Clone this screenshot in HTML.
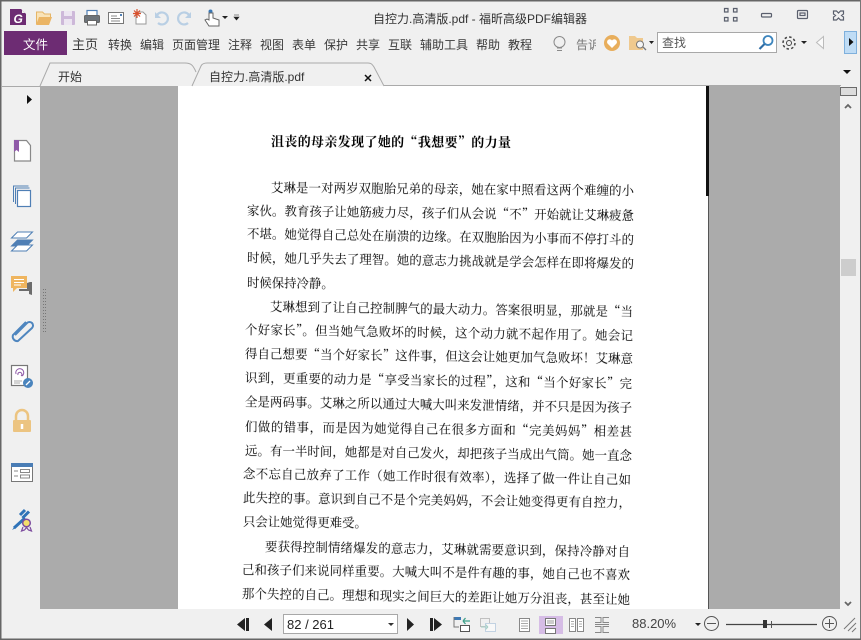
<!DOCTYPE html>
<html lang="zh-CN"><head><meta charset="utf-8"><style>
html,body{margin:0;padding:0}
body{width:861px;height:640px;position:relative;overflow:hidden;background:#f0f0f0;font-family:"Liberation Sans","Noto Sans CJK SC",sans-serif;color:#333}
.a{position:absolute;white-space:nowrap;z-index:2}
.m{position:absolute;z-index:2;top:36px;font-size:12px;line-height:18px;color:#3a3a3a;white-space:nowrap}
#doc{position:absolute;left:40px;top:86px;width:800px;height:523px;background:#ababab;overflow:hidden}
#pg{position:absolute;left:138px;top:0;width:531px;height:523px;background:#fff;border-right:1px solid #555;box-sizing:border-box}
.l{position:absolute;margin-top:-1px;font-family:"Noto Serif CJK SC","Liberation Serif",serif;font-size:12.4px;line-height:16px;height:16px;color:#000;transform-origin:0 50%;text-align:justify;text-align-last:justify;white-space:nowrap;filter:blur(.2px)}
svg{position:absolute;left:0;top:0}
</style></head><body>

<div id="doc"><div id="pg"></div>
<div style="position:absolute;left:666px;top:0;width:2.5px;height:110px;background:#111"></div>
<div class="l" style="left:231px;top:48px;width:240px;font-size:13px;font-weight:700;transform:rotate(.25deg)">沮丧的母亲发现了她的“我想要”的力量</div>
<div class="l" style="left:231px;top:94px;width:363px;transform:rotate(.47deg)">艾琳是一对两岁双胞胎兄弟的母亲，她在家中照看这两个难缠的小</div>
<div class="l" style="left:207px;top:117px;width:387px;transform:rotate(.74deg)">家伙。教育孩子让她筋疲力尽，孩子们从会说“不”开始就让艾琳疲惫</div>
<div class="l" style="left:207px;top:140px;width:387px;transform:rotate(.89deg)">不堪。她觉得自己总处在崩溃的边缘。在双胞胎因为小事而不停打斗的</div>
<div class="l" style="left:207px;top:164px;width:387px;transform:rotate(.89deg)">时候，她几乎失去了理智。她的意志力挑战就是学会怎样在即将爆发的</div>
<div class="l" style="left:207px;top:189px;width:80px;transform:rotate(.7deg)">时候保持冷静。</div>
<div class="l" style="left:230px;top:213px;width:363px;transform:rotate(.79deg)">艾琳想到了让自己控制脾气的最大动力。答案很明显，那就是“当</div>
<div class="l" style="left:205px;top:236px;width:388px;transform:rotate(.89deg)">个好家长”。但当她气急败坏的时候，这个动力就不起作用了。她会记</div>
<div class="l" style="left:205px;top:260px;width:388px;transform:rotate(.74deg)">得自己想要“当个好家长”这件事，但这会让她更加气急败坏！艾琳意</div>
<div class="l" style="left:205px;top:284px;width:387px;transform:rotate(.89deg)">识到，更重要的动力是“享受当家长的过程”，这和“当个好家长”完</div>
<div class="l" style="left:205px;top:308px;width:387px;transform:rotate(.89deg)">全是两码事。艾琳之所以通过大喊大叫来发泄情绪，并不只是因为孩子</div>
<div class="l" style="left:205px;top:333px;width:387px;transform:rotate(.74deg)">们做的错事，而是因为她觉得自己在很多方面和“完美妈妈”相差甚</div>
<div class="l" style="left:205px;top:357px;width:387px;transform:rotate(.74deg)">远。有一半时间，她都是对自己发火，却把孩子当成出气筒。她一直念</div>
<div class="l" style="left:203px;top:380px;width:388px;transform:rotate(.89deg)">念不忘自己放弃了工作（她工作时很有效率），选择了做一件让自己如</div>
<div class="l" style="left:203px;top:404px;width:388px;transform:rotate(.74deg)">此失控的事。意识到自己不是个完美妈妈，不会让她变得更有自控力，</div>
<div class="l" style="left:203px;top:428px;width:115px;transform:rotate(.6deg)">只会让她觉得更难受。</div>
<div class="l" style="left:225px;top:453px;width:365px;transform:rotate(.79deg)">要获得控制情绪爆发的意志力，艾琳就需要意识到，保持冷静对自</div>
<div class="l" style="left:202px;top:476px;width:388px;transform:rotate(.74deg)">己和孩子们来说同样重要。大喊大叫不是件有趣的事，她自己也不喜欢</div>
<div class="l" style="left:202px;top:500px;width:388px;transform:rotate(.89deg)">那个失控的自己。理想和现实之间巨大的差距让她万分沮丧，甚至让她</div>
</div>

<!-- title -->
<div class="a" style="left:373px;top:10px;font-size:12px;line-height:18px;color:#333">自控力.高清版.pdf - 福昕高级PDF编辑器</div>

<!-- menu -->
<div class="a" style="left:4px;top:31px;width:63px;height:24px;background:#6d2c73;color:#fff;font-size:12.500px;line-height:28px;text-align:center">文件</div>
<div class="m" style="left:72px;font-size:13px">主页</div>
<div class="m" style="left:108px">转换</div>
<div class="m" style="left:140px">编辑</div>
<div class="m" style="left:172px">页面管理</div>
<div class="m" style="left:228px">注释</div>
<div class="m" style="left:260px">视图</div>
<div class="m" style="left:292px">表单</div>
<div class="m" style="left:324px">保护</div>
<div class="m" style="left:356px">共享</div>
<div class="m" style="left:388px">互联</div>
<div class="m" style="left:420px">辅助工具</div>
<div class="m" style="left:476px">帮助</div>
<div class="m" style="left:508px">教程</div>
<div class="m" style="left:576px;color:#777;width:20px;overflow:hidden">告诉</div>

<!-- search -->
<div class="a" style="left:657px;top:32px;width:118px;height:19px;background:#fff;border:1px solid #a8a8a8;font-size:12px;line-height:21px;color:#555;text-indent:4px">查找</div>

<!-- tabs text -->
<div class="a" style="left:58px;top:68px;font-size:12px;line-height:18px;color:#333">开始</div>
<div class="a" style="left:209px;top:68px;font-size:12px;line-height:18px;color:#333">自控力.高清版.pdf</div>

<!-- page nav box -->
<div class="a" style="left:283px;top:614px;width:113px;height:18px;background:#fff;border:1px solid #a8a8a8;font-size:13px;line-height:19px;color:#222;text-indent:3px">82 / 261</div>
<div class="a" style="left:388px;top:623px;width:0;height:0;border-left:3px solid transparent;border-right:3px solid transparent;border-top:3px solid #333"></div>
<div class="a" style="left:632px;top:615px;font-size:13px;line-height:18px;color:#444">88.20%</div>

<svg width="861" height="640" viewBox="0 0 861 640">
<!-- window border -->
<rect x="0" y="0" width="861" height="1.500" fill="#666"/>
<rect x="0" y="0" width="1.500" height="640" fill="#666"/>
<rect x="860" y="0" width="1" height="640" fill="#777"/>
<rect x="0" y="638.500" width="861" height="1.500" fill="#666"/>

<!-- logo -->
<path d="M10 9h11l5 5v11h-16z" fill="#6d2c73"/>
<path d="M21 9l5 5h-5z" fill="#f0f0f0"/><path d="M21.500 9.500v4h4" fill="none" stroke="#6d2c73"/>
<text x="13.500" y="23" font-family="Liberation Sans" font-size="12" font-weight="700" font-style="italic" fill="#fff">G</text>
<!-- open -->
<path d="M36.500 24v-12h6l2 2h6v3" fill="#f9e3b8" stroke="#e5b566"/>
<path d="M36 25l3-8h13l-3 8z" fill="#ebb565"/>
<!-- save -->
<rect x="61" y="11" width="14" height="14" rx="1" fill="#cdb8d9"/>
<rect x="64" y="11" width="8" height="5" fill="#ece5f1"/>
<rect x="64" y="19" width="8" height="6" fill="#ece5f1"/>
<!-- print -->
<rect x="87" y="10.500" width="10" height="6" fill="#fff" stroke="#4f7fb5" stroke-width="1.200"/>
<rect x="84.500" y="15.500" width="15" height="7" rx="1" fill="#6d747b" stroke="#666"/>
<rect x="87.500" y="20.500" width="9" height="4.500" fill="#fff" stroke="#666"/>
<!-- mail -->
<rect x="108.500" y="12.500" width="15" height="11" fill="#fff" stroke="#777"/>
<path d="M111 16h6M111 18.500h9M111 21h9" stroke="#888"/>
<rect x="120" y="14" width="2" height="2" fill="#4f7fb5"/>
<!-- new -->
<path d="M136 12h7l3 3v9h-10z" fill="#fff" stroke="#999"/>
<path d="M137 9v9M133 13.500h8M134 10.500l6 6M140 10.500l-6 6" stroke="#d9502c" stroke-width="1.200"/>
<!-- undo redo -->
<path d="M158 23a6 6 0 1 0 -1-8" fill="none" stroke="#b9cfe4" stroke-width="2.200"/><path d="M155 12v6h6z" fill="#b9cfe4"/>
<path d="M188 23a6 6 0 1 1 1-8" fill="none" stroke="#b9cfe4" stroke-width="2.200"/><path d="M191 12v6h-6z" fill="#b9cfe4"/>
<!-- hand -->
<circle cx="210.500" cy="11.500" r="2" fill="#3a78b5"/>
<path d="M209 13v7l-2-1-2 1 4 6h10v-6l-6-2v-5z" fill="#fff" stroke="#666"/>
<path d="M222 16h6l-3 3z" fill="#222"/><path d="M234 15h5M234 17h5l-2.500 3z" fill="#222" stroke="#222" stroke-width=".6"/>

<!-- window controls -->
<g fill="none" stroke="#5a5f6d" stroke-width="1.200">
<path d="M724.500 8.500h3.500v3.500h-3.500zM733.500 8.500h3.500v3.500h-3.500zM724.500 17.500h3.500v3.500h-3.500zM733.500 17.500h3.500v3.500h-3.500z"/>
<rect x="761.500" y="13.500" width="10" height="3.500" rx="1"/>
<rect x="797.500" y="10.500" width="10" height="8" rx="1"/>
<rect x="800" y="13" width="5" height="2.500"/>
<path d="M833.500 11h3l2 2 2-2h3v3l-2 1.500 2 1.500v3h-3l-2-2-2 2h-3v-3l2-1.500-2-1.500z"/>
</g>

<!-- bulb -->
<circle cx="559.500" cy="42" r="5.500" fill="none" stroke="#8a8a8a"/><path d="M557 48h5M557 50.500h5" stroke="#8a8a8a"/>
<!-- heart -->
<circle cx="612" cy="43" r="8" fill="#e8ae5c"/>
<path d="M612 48l-4.500-4.500a2.500 2.500 0 0 1 4.500-3 2.500 2.500 0 0 1 4.500 3z" fill="#fff"/>
<!-- folder search -->
<path d="M629 36h6l2 2h6v12h-14z" fill="#efc98e"/>
<circle cx="640" cy="44.500" r="3.500" fill="#f5f5f5" stroke="#777"/><path d="M643 47l3 3" stroke="#777" stroke-width="1.300"/>
<path d="M649 41h5l-2.500 3z" fill="#222"/>
<!-- gear -->
<circle cx="789" cy="43" r="2.500" fill="none" stroke="#444"/>
<circle cx="789" cy="43" r="6" fill="none" stroke="#444" stroke-width="1.500" stroke-dasharray="2.500 2.200"/>
<path d="M801 41h6l-3 3z" fill="#222"/>
<path d="M823.500 36.500v12l-7-6z" fill="#fafafa" stroke="#bbb"/>
<!-- blue btn -->
<rect x="844.500" y="31.500" width="12" height="22" fill="#bfdcf5" stroke="#7fb0dc"/>
<path d="M849 38v8l4.500-4z" fill="#111"/>

<!-- tabs -->
<path d="M1 86.500h39" stroke="#aaa"/>
<path d="M40 86l10-23h135c6 0 8 2 11 9" fill="#f0f0f0" stroke="#aaa"/>
<path d="M192 86l9-20c1-2 3-3 6-3h161c3 0 4 1 6 4l10 19" fill="#f0f0f0" stroke="#aaa"/>
<path d="M384 85.500h457" stroke="#aaa"/>
<path d="M365 75l6 6M371 75l-6 6" stroke="#111" stroke-width="1.500"/>
<path d="M843 70h8l-4 4z" fill="#111"/>

<!-- side arrow -->
<path d="M27 95v9l5-4.500z" fill="#111"/>
<!-- bookmark -->
<path d="M14.500 140.500h12l4 5v15.500h-16z" fill="#fff" stroke="#888" stroke-width="1.200"/>
<path d="M14 140h5v12l-2.500-2-2.500 2z" fill="#8f5aa8"/>
<!-- pages -->
<path d="M13.500 202v-16h15" fill="none" stroke="#4f7fb5"/>
<path d="M15.500 204v-16h14" fill="none" stroke="#4f7fb5"/>
<rect x="17.500" y="190.500" width="13" height="16" fill="#fff" stroke="#4f7fb5" stroke-width="1.200"/>
<!-- layers -->
<path d="M11.500 238l6-6h15l-6 6z" fill="#fff" stroke="#4f7fb5"/>
<path d="M11.500 246l6-6h15l-6 6z" fill="#4f7fb5" stroke="#4f7fb5"/>
<path d="M11.500 251l6-6h15l-6 6z" fill="#fff" stroke="#4f7fb5"/>
<!-- comment -->
<rect x="11" y="276" width="16" height="12" fill="#efb55f"/>
<path d="M13 288v4l4-4z" fill="#efb55f"/>
<path d="M14 279.500h10M14 282.500h10M14 285h7" stroke="#fff"/>
<path d="M30 282h2v13l-3-1v-3h-10v-2h8v-6z" fill="#6c6c6c"/>
<!-- clip -->
<path d="M15 335l12-12a3.500 3.500 0 0 1 5 5l-14 13a4.500 4.500 0 0 1-5-6l13-13" fill="none" stroke="#4f86bf" stroke-width="2"/>
<!-- signature doc -->
<rect x="11.500" y="365.500" width="16" height="20" fill="#fff" stroke="#777" stroke-width="1.200"/>
<path d="M16 374a4 4 0 1 1 6 2M18 375a2 2 0 1 1 3 1" fill="none" stroke="#8f5aa8"/>
<path d="M14 381h8M14 383h6" stroke="#aaa"/>
<circle cx="28" cy="383" r="5" fill="#4a84bd"/><path d="M26 385l4-4" stroke="#fff" stroke-width="1.300"/>
<!-- lock -->
<path d="M16 422v-6a6 6 0 0 1 12 0v6" fill="none" stroke="#ecc481" stroke-width="2.500"/>
<rect x="13" y="420" width="18" height="12" rx="1" fill="#ecc481"/>
<path d="M22 424v5" stroke="#fff" stroke-width="2.500"/>
<!-- form -->
<rect x="11.500" y="463.500" width="21" height="18" fill="#fff" stroke="#777"/>
<rect x="11" y="463" width="22" height="4" fill="#4a7db5"/>
<path d="M14 471h4M14 476h4" stroke="#888"/>
<rect x="20.500" y="469.500" width="9" height="3" fill="none" stroke="#888"/>
<rect x="20.500" y="475" width="9" height="3" fill="none" stroke="#888"/>
<!-- pen seal -->
<path d="M14 528l11-10" stroke="#2f73b8" stroke-width="3"/>
<path d="M12 530l3-4 1 2z" fill="#2f73b8"/>
<path d="M20 515l5-5M22.500 518l6.500-6.500" stroke="#2f73b8" stroke-width="3"/>
<circle cx="26.500" cy="523" r="3.800" fill="#f4df6a" stroke="#7d4d9f" stroke-width="1.500"/>
<path d="M23 527l-1.500 4 3-1 2-2.500 2 2.500 3 1-1.500-4" fill="none" stroke="#7d4d9f" stroke-width="1.200"/>
<!-- grip -->
<path d="M43.500 289v43M45.500 289v43" stroke="#777" stroke-dasharray="1 2"/>

<!-- scrollbar -->
<rect x="840" y="86" width="17" height="523" fill="#f0f0f0"/>
<rect x="840.500" y="87.500" width="16" height="8" fill="#dcdcdc" stroke="#6a6a6a"/>
<path d="M845 108l3-3 3 3" fill="none" stroke="#666" stroke-width="1.800"/>
<rect x="841" y="259" width="15" height="17" fill="#cdcdcd"/>
<path d="M845 602l3 3 3-3" fill="none" stroke="#666" stroke-width="1.800"/>

<!-- bottom nav -->
<g fill="#222">
<path d="M245 618v13l-8-6.500zM246 618h3v13h-3z"/>
<path d="M272 618v13l-8-6.500z"/>
<path d="M407 618v13l7-6.500z"/>
<path d="M430 618h3v13h-3zM434 618v13l8-6.500z"/>
</g>
<rect x="454" y="617" width="7" height="3" fill="#3e79b5"/><path d="M454 617v10h5" fill="none" stroke="#777"/>
<rect x="460.500" y="625.500" width="9" height="6" fill="#fff" stroke="#555"/>
<path d="M463 621h7M463 621l2.500-3M463 621l2.500 3" stroke="#3ea08a" stroke-width="1.300" fill="none"/>
<g opacity=".55"><rect x="480.500" y="618.500" width="9" height="8" fill="none" stroke="#999"/><rect x="485.500" y="623.500" width="10" height="8" fill="#fff" stroke="#9dbbd8"/><path d="M481 627h7M488 627l-2.500-2.500M488 627l-2.500 2.500" stroke="#6cb5a5" fill="none"/></g>

<!-- page layout -->
<rect x="519.500" y="618.500" width="10" height="13" fill="#fff" stroke="#888"/>
<path d="M521 621h7M521 623.500h7M521 626h7M521 628.500h7" stroke="#aaa"/>
<rect x="539" y="616" width="24" height="18" fill="#d6bde6"/>
<path d="M545.500 618.500h10v7h-10zM545.500 628.500h10v5h-10z" fill="#fff" stroke="#777"/>
<path d="M547 621h7M547 623h7" stroke="#999"/>
<path d="M569.500 618.500h6v13h-6zM577.500 618.500h6v13h-6z" fill="#fff" stroke="#888"/>
<path d="M571 621.500h3M571 624h3M571 626.500h3M579 621.500h3M579 624h3M579 626.500h3" stroke="#aaa"/>
<path d="M595 617.500h6v5h-6M609 617.500h-6v5h6M595 632.500h6v-6h-6M609 632.500h-6v-6h6M595 624.500h14" fill="none" stroke="#888"/>

<!-- zoom -->
<path d="M695 623h6l-3 3z" fill="#222"/>
<circle cx="711.500" cy="623.500" r="7" fill="none" stroke="#555"/><path d="M707 623.500h9" stroke="#555"/>
<path d="M726 624.500h91" stroke="#444" stroke-width="1.200"/>
<rect x="763" y="620" width="4" height="8" fill="#333"/><path d="M771.500 621v7" stroke="#555"/>
<circle cx="829.500" cy="623.500" r="7" fill="none" stroke="#555"/><path d="M825 623.500h9M829.500 619v9" stroke="#555"/>
<path d="M844 629l11-11M848 631l8-8M852 632l4-4" stroke="#777"/>
</svg>

<!-- search lens sits above the search box -->
<svg width="861" height="640" viewBox="0 0 861 640" style="z-index:3;pointer-events:none">
<circle cx="768" cy="40.500" r="4.500" fill="#fff" stroke="#3d85bd" stroke-width="1.800"/><path d="M764.500 44l-5 5" stroke="#2f6da5" stroke-width="2.200"/>
</svg>
</body></html>
